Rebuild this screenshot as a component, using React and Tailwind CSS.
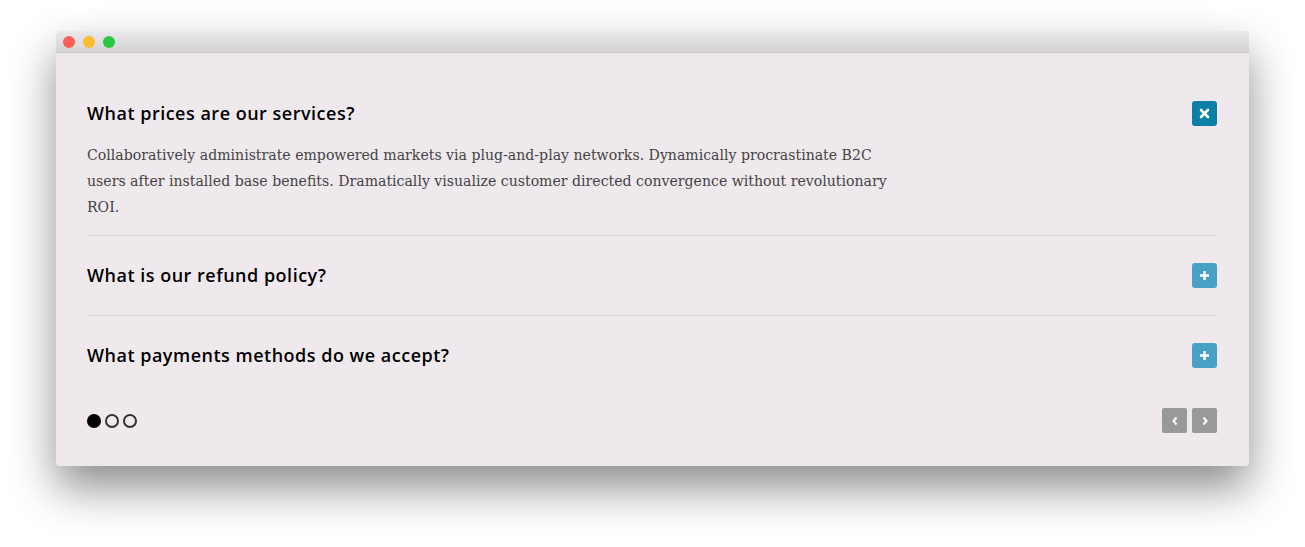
import React, { useState } from 'react';

const items = [
  {
    q: 'What prices are our services?',
    a: 'Collaboratively administrate empowered markets via plug-and-play networks. Dynamically procrastinate B2C users after installed base benefits. Dramatically visualize customer directed convergence without revolutionary ROI.',
  },
  { q: 'What is our refund policy?', a: '' },
  { q: 'What payments methods do we accept?', a: '' },
];

function ToggleIcon({ open }) {
  return open ? (
    <svg width="11" height="11" viewBox="0 0 11 11">
      <path d="M2 2L9 9M9 2L2 9" stroke="white" strokeWidth="2.6" strokeLinecap="round" />
    </svg>
  ) : (
    <svg width="11" height="11" viewBox="0 0 11 11">
      <path d="M5.5 1V10M1 5.5H10" stroke="white" strokeWidth="2.4" />
    </svg>
  );
}

export default function App() {
  const [open, setOpen] = useState(0);

  return (
    <div className="min-h-screen bg-white pt-[31px] px-[56px]">
      <div className="h-[435px] rounded-[4px] bg-[#efe9ee] shadow-[0_22px_45px_rgba(0,0,0,0.45)] overflow-hidden flex flex-col">
        <div className="h-[22px] shrink-0 bg-gradient-to-b from-[#ebe9eb] to-[#d5d3d5] border-b border-[#c9c7c9] flex items-center gap-[8px] pl-[7px] pt-[1px]">
          <span className="w-[12px] h-[12px] rounded-full bg-[#fc5f57]" />
          <span className="w-[12px] h-[12px] rounded-full bg-[#fdbc2e]" />
          <span className="w-[12px] h-[12px] rounded-full bg-[#28c840]" />
        </div>

        <div className="px-[31px] pt-[21px] pr-[32px] flex-1 flex flex-col">
          {items.map((it, i) => {
            const isOpen = open === i;
            return (
              <div key={i} className={i < items.length - 1 ? 'border-b border-[#d9d3d8]' : ''}>
                <div
                  className={`flex items-center justify-between pt-[27px] ${isOpen ? 'pb-[16px]' : 'pb-[27px]'} cursor-pointer`}
                  onClick={() => setOpen(isOpen ? -1 : i)}
                >
                  <h3 className="text-[18px] leading-[25px] font-semibold tracking-[0.5px] text-black" style={{ fontFamily: '"Open Sans", sans-serif' }}>
                    {it.q}
                  </h3>
                  <span className={`w-[25px] h-[25px] rounded-[3px] flex items-center justify-center ${isOpen ? 'bg-[#0b7fa6]' : 'bg-[#49a1c5]'}`}>
                    <ToggleIcon open={isOpen} />
                  </span>
                </div>
                {isOpen && it.a && (
                  <p className="max-w-[810px] pb-[15px] text-[14.1px] leading-[26px] text-[#444]" style={{ fontFamily: '"DejaVu Serif", serif' }}>
                    {it.a}
                  </p>
                )}
              </div>
            );
          })}

          <div className="flex items-center justify-between pt-[13px]">
            <div className="flex items-center gap-[4px]">
              <span className="w-[14px] h-[14px] rounded-full bg-black" />
              <span className="w-[14px] h-[14px] rounded-full border-2 border-[#333]" />
              <span className="w-[14px] h-[14px] rounded-full border-2 border-[#333]" />
            </div>
            <div className="flex items-center gap-[5px]">
              <button className="w-[25px] h-[25px] rounded-[2px] bg-[#999] flex items-center justify-center">
                <svg width="8" height="10" viewBox="0 0 8 10"><path d="M5.5 1.5L2.5 5L5.5 8.5" stroke="white" strokeWidth="2" fill="none" /></svg>
              </button>
              <button className="w-[25px] h-[25px] rounded-[2px] bg-[#999] flex items-center justify-center">
                <svg width="8" height="10" viewBox="0 0 8 10"><path d="M2.5 1.5L5.5 5L2.5 8.5" stroke="white" strokeWidth="2" fill="none" /></svg>
              </button>
            </div>
          </div>
        </div>
      </div>
    </div>
  );
}
